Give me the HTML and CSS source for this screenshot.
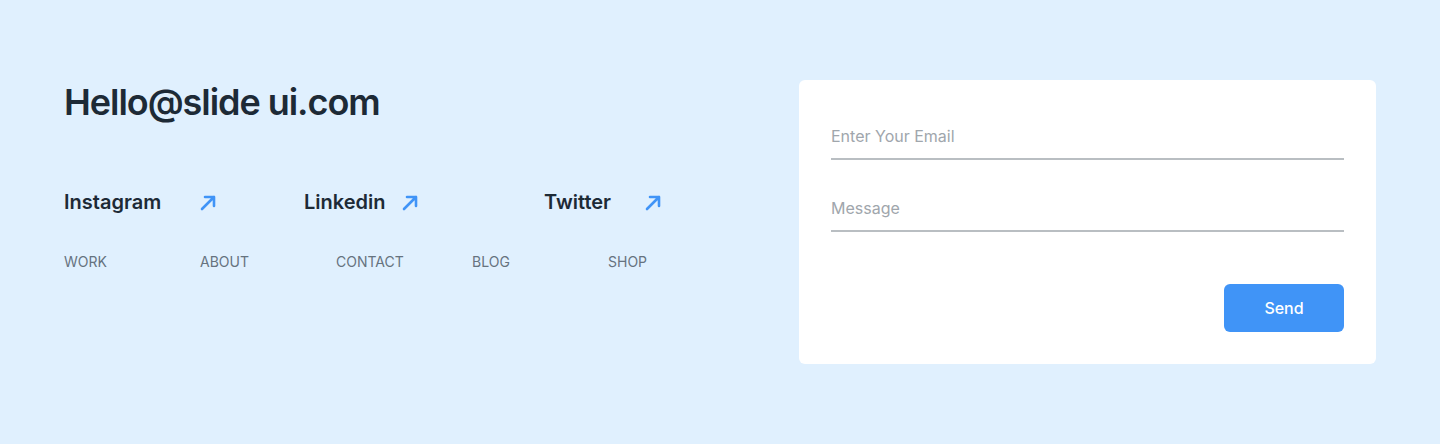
FILE: index.html
```html
<!DOCTYPE html>
<html lang="en">
<head>
<meta charset="utf-8">
<title>Contact</title>
<link rel="stylesheet" href="styles.css">
</head>
<body>
<footer class="footer">
  <div class="info">
    <h1 class="email">Hello@slide ui.com</h1>
    <div class="socials">
      <a class="social" href="#"><span class="social-label label-instagram">Instagram</span>
        <svg class="arrow" width="18" height="18" viewBox="0 0 18 18" aria-hidden="true"><path d="M3 15L15 3M6 3H15V12" fill="none" stroke="#4094f7" stroke-width="2.6" stroke-linecap="round" stroke-linejoin="round"/></svg></a>
      <a class="social" href="#"><span class="social-label label-linkedin">Linkedin</span>
        <svg class="arrow" width="18" height="18" viewBox="0 0 18 18" aria-hidden="true"><path d="M3 15L15 3M6 3H15V12" fill="none" stroke="#4094f7" stroke-width="2.6" stroke-linecap="round" stroke-linejoin="round"/></svg></a>
      <a class="social" href="#"><span class="social-label label-twitter">Twitter</span>
        <svg class="arrow" width="18" height="18" viewBox="0 0 18 18" aria-hidden="true"><path d="M3 15L15 3M6 3H15V12" fill="none" stroke="#4094f7" stroke-width="2.6" stroke-linecap="round" stroke-linejoin="round"/></svg></a>
    </div>
    <nav class="nav">
      <a href="#">WORK</a>
      <a href="#">ABOUT</a>
      <a href="#">CONTACT</a>
      <a href="#">BLOG</a>
      <a href="#">SHOP</a>
    </nav>
  </div>
  <form class="card">
    <input class="field" type="email" placeholder="Enter Your Email">
    <input class="field field-message" type="text" placeholder="Message">
    <div class="actions">
      <button class="send" type="button">Send</button>
    </div>
  </form>
</footer>
</body>
</html>
```
FILE: styles.css
```css
* { box-sizing: border-box; }
html, body { margin: 0; padding: 0; }
body {
  background: #e0f0fe;
  font-family: Inter, "Noto Sans", sans-serif;
  color: #1d2a36;
  height: 444px;
}
.footer {
  display: flex;
  justify-content: space-between;
  align-items: flex-start;
  padding: 80px 64px 0 64px;
}
.info { flex: 1; }
.email {
  margin: 0;
  font-size: 36px;
  line-height: 44px;
  font-weight: 600;
  letter-spacing: -1.05px;
  color: #1d2a36;
}
.socials {
  display: flex;
  margin-top: 64px;
}
.social {
  width: 240px;
  display: flex;
  align-items: center;
  text-decoration: none;
  color: #1d2a36;
  font-size: 20px;
  line-height: 28px;
  font-weight: 600;
}
.social-label { display: inline-block; }
.label-instagram { width: 135px; }
.label-linkedin { width: 97px; }
.label-twitter { width: 100px; }
.arrow { display: block; margin-top: 2px; }
.nav {
  display: flex;
  margin-top: 36px;
}
.nav a {
  width: 136px;
  font-size: 14px;
  line-height: 20px;
  color: #66737f;
  text-decoration: none;
}
.card {
  width: 577px;
  background: #ffffff;
  border-radius: 6px;
  padding: 32px;
  display: flex;
  flex-direction: column;
}
.field {
  display: block;
  width: 100%;
  height: 48px;
  border: none;
  border-bottom: 2px solid #b9bec2;
  padding: 2px 0 0 0;
  font-family: Inter, "Noto Sans", sans-serif;
  font-size: 16px;
  color: #1d2a36;
  background: transparent;
  outline: none;
}
.field::placeholder { color: #a0a6ac; }
.field-message { margin-top: 24px; }
.actions {
  display: flex;
  justify-content: flex-end;
  margin-top: 52px;
}
.send {
  width: 120px;
  height: 48px;
  border: none;
  border-radius: 6px;
  background: #4094f7;
  color: #ffffff;
  font-family: Inter, "Noto Sans", sans-serif;
  font-size: 16px;
  font-weight: 500;
  cursor: pointer;
}
```
